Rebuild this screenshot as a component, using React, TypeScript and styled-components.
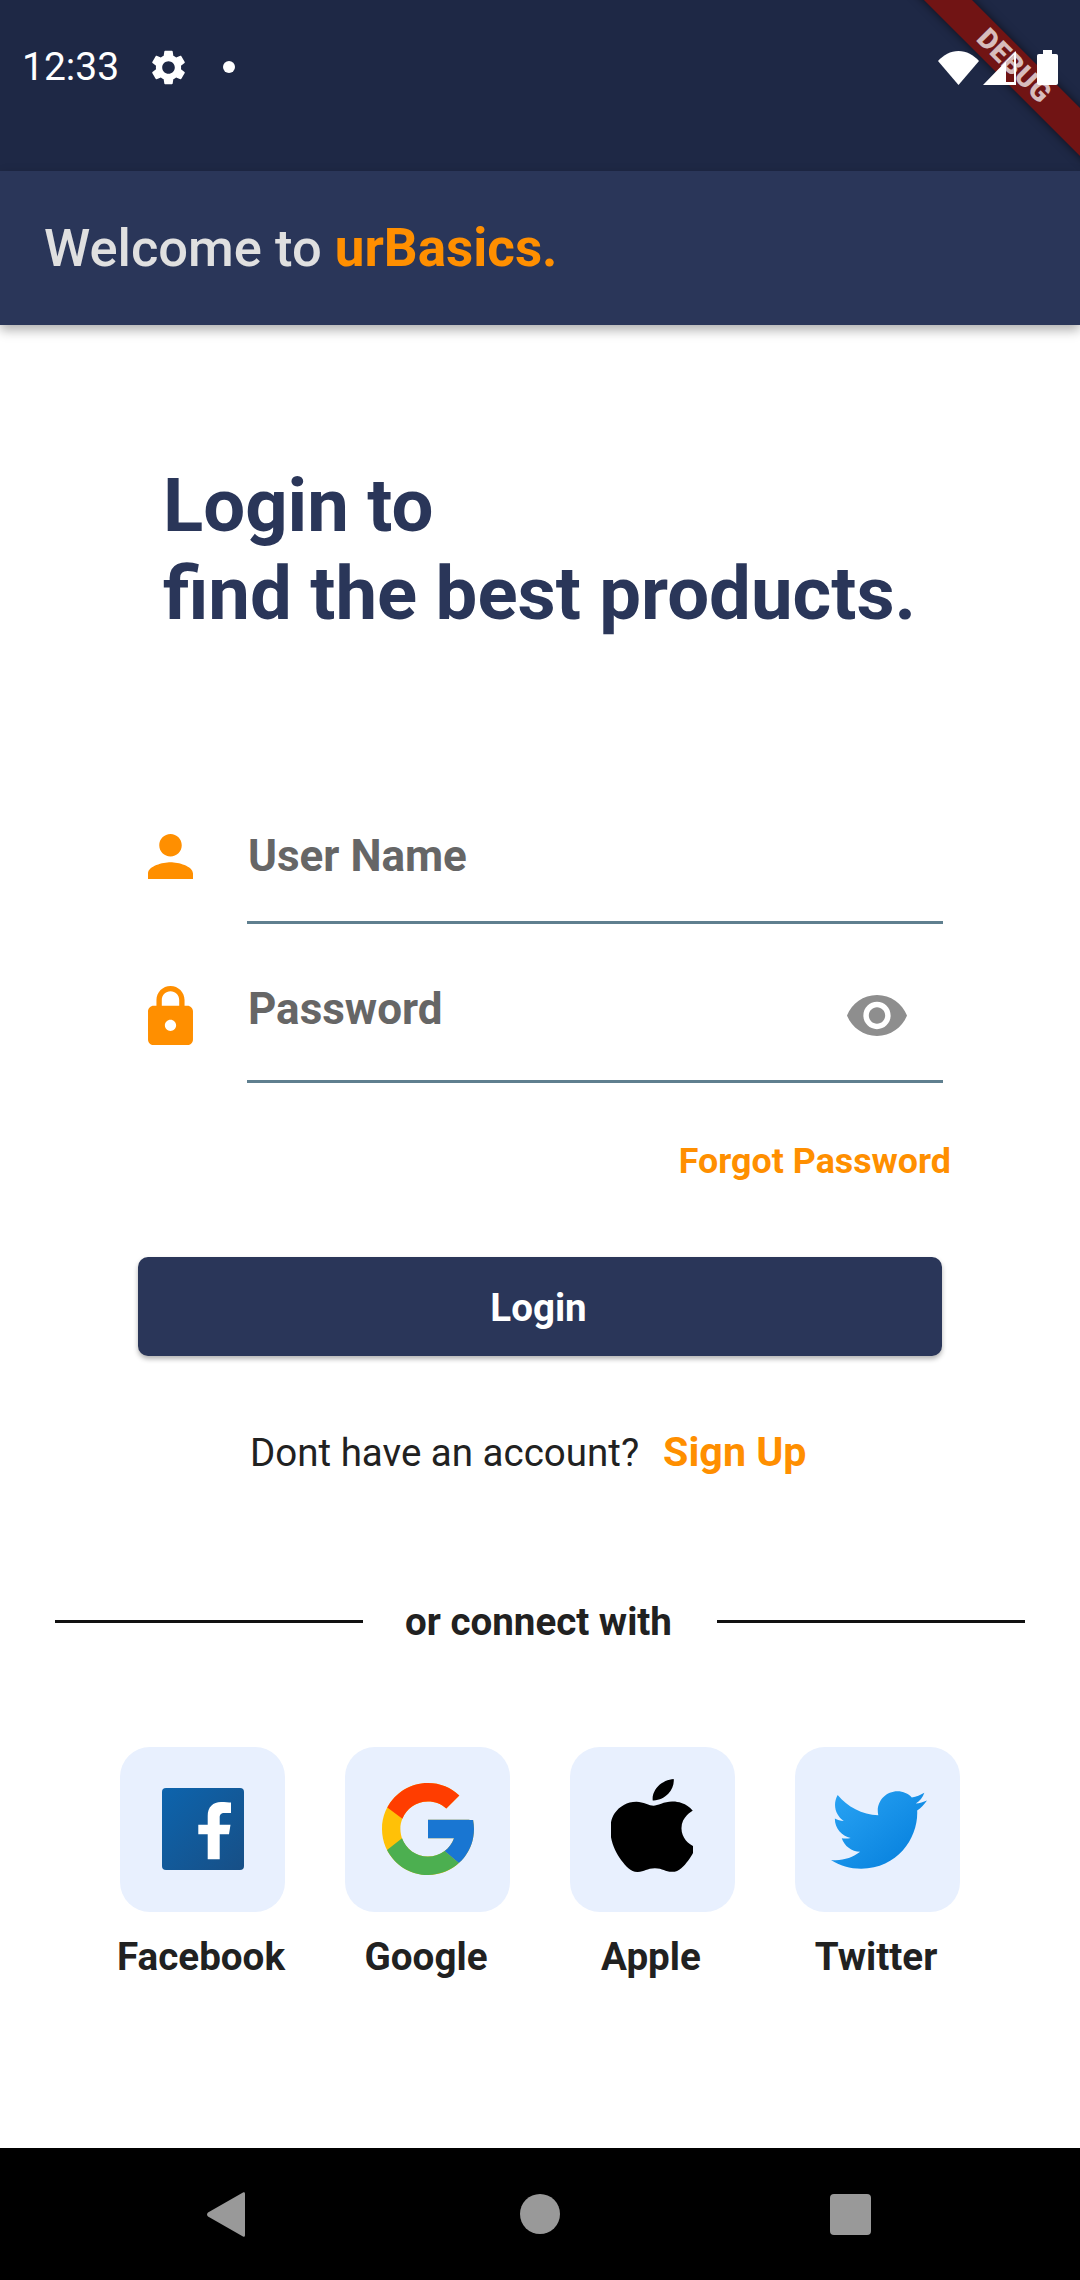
import React from "react";
import styled, { createGlobalStyle } from "styled-components";

const Global = createGlobalStyle`
  html, body { margin: 0; padding: 0; background: #fff; }
  * { box-sizing: border-box; }
`;

const Page = styled.div`
  width: 1080px;
  height: 2280px;
  display: flex;
  flex-direction: column;
  overflow: hidden;
  position: relative;
  background: #fff;
  font-family: Roboto, "Liberation Sans", sans-serif;
`;

const StatusBar = styled.header`
  height: 171px;
  flex: none;
  background: #1e2845;
  color: #fff;
  position: relative;
`;

const StatusRow = styled.div`
  height: 134px;
  padding: 0 22px 0 22px;
  display: flex;
  align-items: center;
  justify-content: space-between;
  position: relative;
  z-index: 1;
`;

const StatusLeft = styled.div`
  display: flex;
  align-items: center;
`;

const Clock = styled.span`
  font-size: 39px;
  line-height: 46px;
  font-weight: 400;
  width: 130px;
`;

const Dot = styled.span`
  width: 12px;
  height: 12px;
  border-radius: 50%;
  background: #fff;
  margin-left: 38px;
`;

const StatusRight = styled.div`
  display: flex;
  align-items: flex-end;
`;

const DebugBanner = styled.div`
  position: absolute;
  left: 814px;
  top: 49px;
  width: 400px;
  height: 34px;
  transform: rotate(45deg);
  background: #711414;
  box-shadow: 0 0 10px rgba(0, 0, 0, 0.6);
  color: rgba(255, 255, 255, 0.72);
  font-size: 28px;
  font-weight: 900;
  line-height: 34px;
  letter-spacing: 0.4px;
  text-align: center;
`;

const AppBar = styled.div`
  height: 154px;
  flex: none;
  background: #2a3659;
  box-shadow: 0 5px 11px rgba(0, 0, 0, 0.32);
  padding-left: 44px;
  display: flex;
  align-items: center;
  position: relative;
  z-index: 2;
`;

const AppTitle = styled.h1`
  margin: 0;
  font-size: 52.5px;
  line-height: 62px;
  font-weight: 500;
  color: #e0e0e0;
`;

const Accent = styled.span`
  color: #ff8f00;
  font-size: 53px;
  font-weight: 700;
`;

const Main = styled.main`
  flex: 1;
  display: flex;
  flex-direction: column;
`;

const Heading = styled.h2`
  margin: 137px 0 0 163px;
  font-size: 74.3px;
  line-height: 87.5px;
  font-weight: 700;
  color: #2a3659;
`;

const FieldRow = styled.div<{ $top: number }>`
  display: flex;
  margin: ${(p) => p.$top}px 0 0 148px;
`;

const IconSlot = styled.div<{ $pad: number }>`
  width: 99px;
  padding-top: ${(p) => p.$pad}px;
  flex: none;
`;

const FieldBody = styled.div<{ $h: number; $pad: number }>`
  width: 696px;
  height: ${(p) => p.$h}px;
  padding-top: ${(p) => p.$pad}px;
  border-bottom: 3px solid #5f7f8f;
  display: flex;
  justify-content: space-between;
  align-items: flex-start;
`;

const Placeholder = styled.span`
  font-size: 44px;
  line-height: 50px;
  font-weight: 700;
  color: #666;
  margin-left: 1px;
`;

const EyeSlot = styled.span`
  margin: 11px 36px 0 0;
  display: block;
`;

const ForgotRow = styled.div`
  margin: 56px 129px 0 0;
  text-align: right;
  font-size: 35.8px;
  line-height: 44px;
  font-weight: 700;
  color: #ff8f00;
`;

const LoginButton = styled.button`
  display: block;
  margin: 74px 0 0 138px;
  width: 804px;
  height: 99px;
  padding: 1px 3px 0 0;
  border: 0;
  border-radius: 10px;
  background: #2a3659;
  box-shadow: 0 3px 5px rgba(0, 0, 0, 0.3);
  color: #fff;
  font-family: inherit;
  font-size: 38.5px;
  font-weight: 700;
`;

const SignupRow = styled.div`
  margin: 71px 0 0 250px;
  display: flex;
  align-items: center;
  height: 50px;
`;

const SignupText = styled.span`
  font-size: 38.5px;
  color: #212121;
`;

const SignupLink = styled.span`
  margin-left: 24px;
  font-size: 41.2px;
  font-weight: 700;
  color: #ff8f00;
`;

const DividerRow = styled.div`
  margin: 119px 0 0 55px;
  width: 970px;
  height: 50px;
  display: flex;
  align-items: center;
  justify-content: space-between;
`;

const Rule = styled.span`
  width: 308px;
  height: 3px;
  background: #111;
`;

const DividerText = styled.span`
  margin-right: 3px;
  font-size: 38.5px;
  font-weight: 700;
  color: #212121;
`;

const SocialGrid = styled.div`
  margin: 101px 0 0 120px;
  display: grid;
  grid-template-columns: repeat(4, 165px);
  column-gap: 60px;
`;

const SocialItem = styled.div`
  display: flex;
  flex-direction: column;
  align-items: center;
`;

const Tile = styled.div<{ $nudgeX?: number; $lift?: number }>`
  width: 165px;
  height: 165px;
  border-radius: 30px;
  background: #e8f0fe;
  display: flex;
  align-items: center;
  justify-content: center;
  padding-left: ${(p) => (p.$nudgeX && p.$nudgeX > 0 ? p.$nudgeX : 0)}px;
  padding-right: ${(p) => (p.$nudgeX && p.$nudgeX < 0 ? -p.$nudgeX : 0)}px;
  padding-bottom: ${(p) => p.$lift ?? 0}px;
`;

const SocialLabel = styled.span`
  margin: 20px 3px 0 0;
  font-size: 38.6px;
  line-height: 50px;
  font-weight: 700;
  color: #212121;
  white-space: nowrap;
`;

const NavBar = styled.nav`
  height: 132px;
  flex: none;
  background: #000;
  display: flex;
  align-items: center;
  padding-left: 207px;
`;

const NavCircle = styled.span`
  width: 40px;
  height: 40px;
  border-radius: 50%;
  background: #999;
  margin-left: 275px;
`;

const NavSquare = styled.span`
  width: 41px;
  height: 41px;
  border-radius: 4px;
  background: #999;
  margin-left: 270px;
`;

export default function App() {
  return (
    <Page>
      <Global />
      <StatusBar>
        <DebugBanner>DEBUG</DebugBanner>
        <StatusRow>
          <StatusLeft>
            <Clock>12:33</Clock>
            <svg width="33" height="35" viewBox="2.6 2 18.8 20" fill="#fff">
              <path d="M19.14 12.94c.04-.3.06-.61.06-.94 0-.32-.02-.64-.07-.94l2.03-1.58c.18-.14.23-.41.12-.61l-1.92-3.32c-.12-.22-.37-.29-.59-.22l-2.39.96c-.5-.38-1.03-.7-1.62-.94l-.36-2.54c-.04-.24-.24-.41-.48-.41h-3.84c-.24 0-.43.17-.47.41l-.36 2.54c-.59.24-1.13.57-1.62.94l-2.39-.96c-.22-.08-.47 0-.59.22L2.74 8.87c-.12.21-.08.47.12.61l2.03 1.58c-.05.3-.09.63-.09.94s.02.64.07.94l-2.03 1.58c-.18.14-.23.41-.12.61l1.92 3.32c.12.22.37.29.59.22l2.39-.96c.5.38 1.03.7 1.62.94l.36 2.54c.05.24.24.41.48.41h3.84c.24 0 .44-.17.47-.41l.36-2.54c.59-.24 1.13-.56 1.62-.94l2.39.96c.22.08.47 0 .59-.22l1.92-3.32c.12-.22.07-.47-.12-.61l-2.01-1.58zM12 15.6c-1.98 0-3.6-1.62-3.6-3.6s1.62-3.6 3.6-3.6 3.6 1.62 3.6 3.6-1.62 3.6-3.6 3.6z" />
            </svg>
            <Dot />
          </StatusLeft>
          <StatusRight>
            <svg width="41" height="34" viewBox="0 0 41 34" fill="#fff">
              <path d="M0 10C5.5 4 12.5 0 20.5 0C28.5 0 35.5 4 41 10L20.5 34Z" />
            </svg>
            <svg width="33" height="34" viewBox="0 0 33 34" fill="#fff" style={{ marginLeft: 4 }}>
              <path fillRule="evenodd" d="M0 34L33 0V34ZM23 11V31H31V3.5Z" />
            </svg>
            <svg width="21" height="35" viewBox="0 0 21 35" fill="#fff" style={{ marginLeft: 21 }}>
              <path d="M6 0H15V4H19C20.2 4 21 4.8 21 6V33C21 34.2 20.2 35 19 35H2C.8 35 0 34.2 0 33V6C0 4.8.8 4 2 4H6Z" />
            </svg>
          </StatusRight>
        </StatusRow>
      </StatusBar>

      <AppBar>
        <AppTitle>
          Welcome to <Accent>urBasics.</Accent>
        </AppTitle>
      </AppBar>

      <Main>
        <Heading>
          Login to
          <br />
          find the best products.
        </Heading>

        <FieldRow $top={184}>
          <IconSlot $pad={13}>
            <svg width="45" height="45" viewBox="4 4 16 16" fill="#ff8f00" style={{ display: "block" }}>
              <path d="M12 12c2.21 0 4-1.79 4-4s-1.79-4-4-4-4 1.79-4 4 1.79 4 4 4zm0 2c-2.67 0-8 1.34-8 4v2h16v-2c0-2.66-5.33-4-8-4z" />
            </svg>
          </IconSlot>
          <FieldBody $h={103} $pad={10}>
            <Placeholder>User Name</Placeholder>
          </FieldBody>
        </FieldRow>

        <FieldRow $top={52}>
          <IconSlot $pad={10}>
            <svg width="45" height="59" viewBox="4 1 16 21" fill="#ff8f00" style={{ display: "block" }}>
              <path d="M18 8h-1V6c0-2.76-2.24-5-5-5S7 3.24 7 6v2H6c-1.1 0-2 .9-2 2v10c0 1.1.9 2 2 2h12c1.1 0 2-.9 2-2V10c0-1.1-.9-2-2-2zm-6 9c-1.1 0-2-.9-2-2s.9-2 2-2 2 .9 2 2-.9 2-2 2zm3.1-9H8.9V6c0-1.71 1.39-3.1 3.1-3.1 1.71 0 3.1 1.39 3.1 3.1v2z" />
            </svg>
          </IconSlot>
          <FieldBody $h={107} $pad={8}>
            <Placeholder>Password</Placeholder>
            <EyeSlot>
              <svg width="60" height="41" viewBox="1 4.5 22 15" fill="#8e8e8e" style={{ display: "block" }}>
                <path d="M12 4.5C7 4.5 2.73 7.61 1 12c1.73 4.39 6 7.5 11 7.5s9.27-3.11 11-7.5c-1.73-4.39-6-7.5-11-7.5zM12 17c-2.76 0-5-2.24-5-5s2.24-5 5-5 5 2.24 5 5-2.24 5-5 5zm0-8c-1.66 0-3 1.34-3 3s1.34 3 3 3 3-1.34 3-3-1.34-3-3-3z" />
              </svg>
            </EyeSlot>
          </FieldBody>
        </FieldRow>

        <ForgotRow>Forgot Password</ForgotRow>
        <LoginButton>Login</LoginButton>

        <SignupRow>
          <SignupText>Dont have an account?</SignupText>
          <SignupLink>Sign Up</SignupLink>
        </SignupRow>

        <DividerRow>
          <Rule />
          <DividerText>or connect with</DividerText>
          <Rule />
        </DividerRow>

        <SocialGrid>
          <SocialItem>
            <Tile $lift={1}>
              <svg width="82" height="82" viewBox="0 0 82 82">
                <defs>
                  <linearGradient id="fbGrad" x1="0" y1="0" x2="1" y2="1">
                    <stop offset="0" stopColor="#0d64ad" />
                    <stop offset="1" stopColor="#174f86" />
                  </linearGradient>
                </defs>
                <rect width="82" height="82" rx="4" fill="url(#fbGrad)" />
                <path
                  fill="#fff"
                  d="M45.7 71.3V46.3H36.3V36.7H45.7V28C45.7 19 51 14 59 14C63 14 67 14.3 69 14.6V25H62.5C58.8 25 57.7 26.8 57.7 30V36.7H68.5L67 46.3H57.7V71.3Z"
                />
              </svg>
            </Tile>
            <SocialLabel>Facebook</SocialLabel>
          </SocialItem>

          <SocialItem>
            <Tile $lift={1}>
              <svg width="92" height="92" viewBox="4 4 40 40">
                <path fill="#FFC107" d="M43.611,20.083H42V20H24v8h11.303c-1.649,4.657-6.08,8-11.303,8c-6.627,0-12-5.373-12-12c0-6.627,5.373-12,12-12c3.059,0,5.842,1.154,7.961,3.039l5.657-5.657C34.046,6.053,29.268,4,24,4C12.955,4,4,12.955,4,24c0,11.045,8.955,20,20,20c11.045,0,20-8.955,20-20C44,22.659,43.862,21.35,43.611,20.083z" />
                <path fill="#FF3D00" d="M6.306,14.691l6.571,4.819C14.655,15.108,18.961,12,24,12c3.059,0,5.842,1.154,7.961,3.039l5.657-5.657C34.046,6.053,29.268,4,24,4C16.318,4,9.656,8.337,6.306,14.691z" />
                <path fill="#4CAF50" d="M24,44c5.166,0,9.86-1.977,13.409-5.192l-6.19-5.238C29.211,35.091,26.715,36,24,36c-5.202,0-9.619-3.317-11.283-7.946l-6.522,5.025C9.505,39.556,16.227,44,24,44z" />
                <path fill="#1976D2" d="M43.611,20.083H42V20H24v8h11.303c-0.792,2.237-2.231,4.166-4.087,5.571c0.001-0.001,0.002-0.001,0.003-0.002l6.19,5.238C36.971,39.205,44,34,44,24C44,22.659,43.862,21.35,43.611,20.083z" />
              </svg>
            </Tile>
            <SocialLabel>Google</SocialLabel>
          </SocialItem>

          <SocialItem>
            <Tile $nudgeX={-1} $lift={9}>
              <svg width="82" height="93" viewBox="2.4 0 18.8 24" preserveAspectRatio="none" fill="#000">
                <path d="M12.152 6.896c-.948 0-2.415-1.078-3.96-1.04-2.04.027-3.91 1.183-4.961 3.014-2.117 3.675-.546 9.103 1.519 12.09 1.013 1.454 2.208 3.09 3.792 3.039 1.52-.065 2.09-.987 3.935-.987 1.831 0 2.35.987 3.96.948 1.637-.026 2.676-1.48 3.676-2.948 1.156-1.688 1.636-3.325 1.662-3.415-.039-.013-3.182-1.221-3.22-4.857-.026-3.04 2.48-4.494 2.597-4.559-1.429-2.09-3.623-2.324-4.39-2.376-2-.156-3.675 1.09-4.61 1.09zM15.53 3.83c.843-1.012 1.4-2.427 1.245-3.83-1.207.052-2.662.805-3.532 1.818-.78.896-1.454 2.338-1.273 3.714 1.338.104 2.715-.688 3.559-1.701" />
              </svg>
            </Tile>
            <SocialLabel>Apple</SocialLabel>
          </SocialItem>

          <SocialItem>
            <Tile $nudgeX={3}>
              <svg width="96" height="78" viewBox="6 9 36 29">
                <defs>
                  <linearGradient id="twGrad" gradientUnits="userSpaceOnUse" x1="10.341" y1="5.418" x2="40.798" y2="41.972">
                    <stop offset="0" stopColor="#2aa4f4" />
                    <stop offset="1" stopColor="#007ad9" />
                  </linearGradient>
                </defs>
                <path
                  fill="url(#twGrad)"
                  d="M42,12.429c-1.323,0.586-2.746,0.977-4.247,1.162c1.526-0.906,2.7-2.351,3.251-4.058c-1.428,0.837-3.01,1.452-4.693,1.776C34.967,9.884,33.05,9,30.926,9c-4.08,0-7.387,3.278-7.387,7.32c0,0.572,0.067,1.129,0.193,1.67c-6.138-0.308-11.582-3.226-15.224-7.654c-0.64,1.082-1,2.349-1,3.686c0,2.541,1.301,4.778,3.285,6.096c-1.211-0.037-2.351-0.374-3.349-0.914c0,0.022,0,0.055,0,0.086c0,3.551,2.547,6.508,5.923,7.181c-0.617,0.169-1.269,0.263-1.941,0.263c-0.477,0-0.942-0.054-1.392-0.135c0.94,2.902,3.667,5.023,6.898,5.086c-2.528,1.96-5.712,3.134-9.174,3.134c-0.598,0-1.183-0.034-1.761-0.104C9.268,36.786,13.152,38,17.321,38c13.585,0,21.017-11.156,21.017-20.834c0-0.317-0.01-0.633-0.025-0.945C39.763,15.197,41.013,13.905,42,12.429"
                />
              </svg>
            </Tile>
            <SocialLabel>Twitter</SocialLabel>
          </SocialItem>
        </SocialGrid>
      </Main>

      <NavBar>
        <svg width="38" height="45" viewBox="0 0 38 45" fill="#999">
          <path d="M36 0.6C37.2 -.2 38 .4 38 2V43C38 44.6 37.2 45.2 36 44.4L1 24.5C-.3 23.4-.3 21.6 1 20.5Z" />
        </svg>
        <NavCircle />
        <NavSquare />
      </NavBar>
    </Page>
  );
}
